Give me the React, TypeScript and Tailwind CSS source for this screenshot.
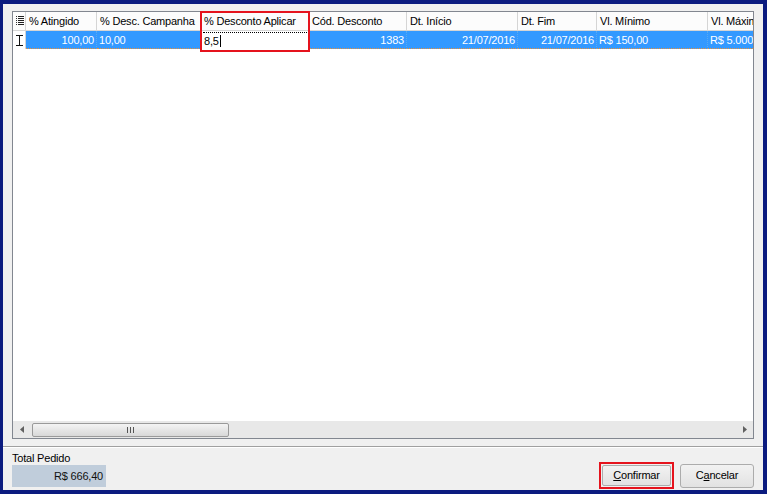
import React from "react"

type Col = { label: string; w: number; val?: string; right?: boolean; edit?: boolean }

const cols: Col[] = [
  { label: "% Atingido", w: 71, val: "100,00", right: true },
  { label: "% Desc. Campanha", w: 104, val: "10,00" },
  { label: "% Desconto Aplicar", w: 108, edit: true },
  { label: "Cód. Desconto", w: 98, val: "1383", right: true },
  { label: "Dt. Início", w: 111, val: "21/07/2016", right: true },
  { label: "Dt. Fim", w: 79, val: "21/07/2016", right: true },
  { label: "Vl. Mínimo", w: 111, val: "R$ 150,00" },
  { label: "Vl. Máximo", w: 111, val: "R$ 5.000,00" },
]

function ListIcon() {
  return (
    <svg width="8" height="10" viewBox="0 0 8 10" shapeRendering="crispEdges">
      {[0, 2, 4, 6, 8].map((y) => (
        <g key={y}>
          <rect x="0" y={y} width="1" height="1" fill="#333" />
          <rect x="2" y={y} width="6" height="1" fill="#222" />
        </g>
      ))}
    </svg>
  )
}

function IBeam() {
  return (
    <svg width="7" height="11" viewBox="0 0 7 11" shapeRendering="crispEdges">
      <rect x="0" y="0" width="7" height="1" fill="#111" />
      <rect x="3" y="0" width="1" height="11" fill="#111" />
      <rect x="0" y="10" width="7" height="1" fill="#111" />
    </svg>
  )
}

export default function App() {
  return (
    <div className="flex h-[494px] w-[767px] flex-col overflow-hidden bg-[#0b1b7f] pt-[4px] pb-[4px] pl-[3px] pr-[4px] font-['Liberation_Sans',Arial,sans-serif] text-[11px] tracking-[-0.2px] text-black">
      <div className="flex flex-1 flex-col bg-[#f0f0f0]">
        {/* grid */}
        <div className="px-[9px] pt-[7px]">
          <div className="relative flex h-[428px] flex-col border border-[#828790] bg-white">
            {/* header */}
            <div className="flex h-[19px] overflow-hidden border-b border-[#d5d5d5] bg-[#fcfcfc]">
              <div className="flex w-[13px] shrink-0 items-center justify-center border-r border-[#d5d5d5] pl-[1px]">
                <ListIcon />
              </div>
              {cols.map((c) => (
                <div
                  key={c.label}
                  style={{ width: c.w }}
                  className="flex shrink-0 items-center whitespace-nowrap border-r border-[#d5d5d5] pl-[3px] pt-[1px] leading-none"
                >
                  {c.label}
                </div>
              ))}
            </div>
            {/* data row */}
            <div className="flex h-[18px] overflow-hidden">
              <div className="flex w-[13px] shrink-0 items-center justify-center border-r border-[#d5d5d5] bg-white">
                <IBeam />
              </div>
              {cols.map((c) =>
                c.edit ? (
                  <div
                    key={c.label}
                    style={{ width: c.w }}
                    className="flex shrink-0 flex-col bg-white px-[2px]"
                  >
                    <div className="mt-[1px] border-t border-dotted border-black" />
                    <div className="flex flex-1 items-center pl-[1px] leading-none">
                      8,5<span className="ml-[1px] inline-block h-[12px] w-[1px] bg-black" />
                    </div>
                  </div>
                ) : (
                  <div
                    key={c.label}
                    style={{ width: c.w }}
                    className={
                      "flex shrink-0 items-center whitespace-nowrap border-b border-r border-b-[#e8903a] border-r-[#5aa9f0] border-dotted bg-[#3399ff] px-[2px] pt-[1px] leading-none text-white " +
                      (c.right ? "justify-end" : "justify-start")
                    }
                  >
                    {c.val}
                  </div>
                )
              )}
            </div>
            <div className="flex-1 bg-white" />
            {/* horizontal scrollbar */}
            <div className="flex h-[17px] items-center bg-[#e8e8e8]">
              <div className="flex h-[17px] w-[17px] items-center justify-center">
                <svg width="4" height="7" viewBox="0 0 4 7">
                  <path d="M4 0 L0 3.5 L4 7 Z" fill="#606060" />
                </svg>
              </div>
              <div className="ml-[2px] flex h-[14px] w-[197px] items-center justify-center rounded-[2px] border border-[#9a9a9a] bg-gradient-to-b from-[#f4f4f4] to-[#d8d8d8]">
                <div className="flex gap-[2px]">
                  <div className="h-[6px] w-[1px] bg-[#555]" />
                  <div className="h-[6px] w-[1px] bg-[#555]" />
                  <div className="h-[6px] w-[1px] bg-[#555]" />
                </div>
              </div>
              <div className="flex-1" />
              <div className="flex h-[17px] w-[17px] items-center justify-center">
                <svg width="4" height="7" viewBox="0 0 4 7">
                  <path d="M0 0 L4 3.5 L0 7 Z" fill="#606060" />
                </svg>
              </div>
            </div>
            {/* highlight around edited column */}
            <div className="pointer-events-none absolute left-[187px] top-[-1px] h-[41px] w-[110px] border-2 border-[#e5131d]" />
          </div>
        </div>
        {/* separator */}
        <div className="mt-[7px] h-[2px] border-t border-[#a0a0a0] bg-white" />
        {/* bottom panel */}
        <div className="flex h-[42px] items-start justify-between px-[9px]">
          <div className="flex flex-col pt-[4px]">
            <div className="h-[12px] leading-[12px]">Total Pedido</div>
            <div className="mt-[1px] flex h-[22px] w-[94px] items-center justify-end bg-[#c0cddb] pr-[3px] text-[#111]">
              R$ 666,40
            </div>
          </div>
          <div className="mt-[14px] flex items-center gap-[6px]">
            <div className="h-[27px] w-[75px] border-2 border-[#e5131d] p-[1px]">
              <button className="h-full w-full rounded-[2px] border border-[#acacac] bg-gradient-to-b from-[#f2f2f2] to-[#e2e2e2] leading-none">
                <span className="underline">C</span>onfirmar
              </button>
            </div>
            <button className="h-[24px] w-[74px] rounded-[3px] border border-[#acacac] bg-gradient-to-b from-[#f2f2f2] to-[#e2e2e2] leading-none">
              C<span className="underline">a</span>ncelar
            </button>
          </div>
        </div>
      </div>
    </div>
  )
}
